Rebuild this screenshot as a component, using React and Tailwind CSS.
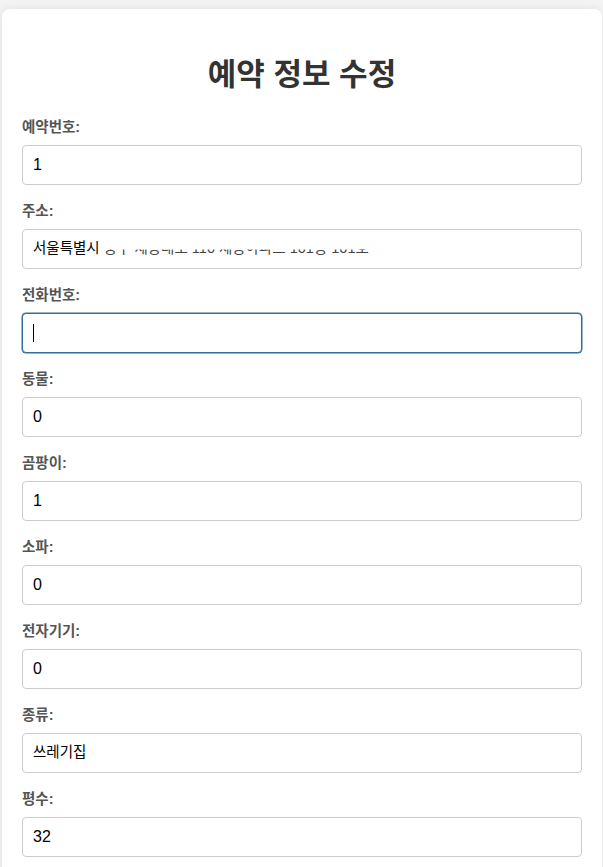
import React from "react";

const fields = [
  { label: "예약번호:", value: "1" },
  { label: "주소:", value: "address" },
  { label: "전화번호:", value: "", focus: true },
  { label: "동물:", value: "0" },
  { label: "곰팡이:", value: "1" },
  { label: "소파:", value: "0" },
  { label: "전자기기:", value: "0" },
  { label: "종류:", value: "쓰레기집", ko: true },
  { label: "평수:", value: "32" },
];

const font = "font-['Liberation_Sans','Noto_Sans_CJK_KR',sans-serif]";

function Field({ f }) {
  let content;
  if (f.value === "address") {
    content = (
      <div className="flex items-center whitespace-nowrap text-[14.5px] text-black">
        <span>서울특별시&nbsp;</span>
        <span className="[clip-path:inset(52%_0_0_0)] text-[#444]">중구 세종대로 110 세종아파트 101동 101호</span>
      </div>
    );
  } else if (f.focus) {
    content = <div className="w-px h-[18px] bg-black" />;
  } else {
    content = (
      <span className={f.ko ? "text-[14.5px] text-black" : "text-[16px] text-black"}>{f.value}</span>
    );
  }
  return (
    <div className="mb-[15px]">
      <div className="h-[24px] mb-[5px] flex items-center text-[14.5px] font-bold text-[#555]">{f.label}</div>
      <div
        className={
          "h-[40px] w-full rounded-[4px] border bg-white flex items-center px-[10px] " +
          (f.focus ? "border-[#2f6f9f] shadow-[0_0_0_0.5px_#2f6f9f]" : "border-[#cccccc]")
        }
      >
        {content}
      </div>
    </div>
  );
}

export default function App() {
  return (
    <div className={"min-h-[867px] bg-[#f3f3f3] pt-[9px] pl-[2px] " + font}>
      <div className="w-[600px] rounded-[8px] bg-white px-[20px] pt-[20px] pb-[20px] shadow-[0_0_8px_rgba(0,0,0,0.08)]">
        <h1 className="mt-[28px] mb-[23px] h-[36px] flex items-center justify-center text-[31px] font-bold text-[#333]">
          예약 정보 수정
        </h1>
        {fields.map((f, i) => (
          <Field key={i} f={f} />
        ))}
      </div>
    </div>
  );
}
